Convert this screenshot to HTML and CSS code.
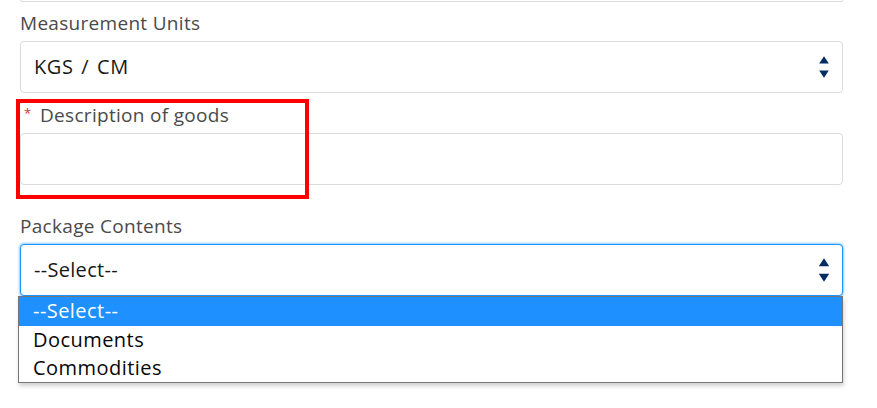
FILE: index.html
```html
<!DOCTYPE html>
<html lang="en">
<head>
<meta charset="utf-8">
<title>Shipment form</title>
<link rel="stylesheet" href="styles.css">
</head>
<body>
<div class="form">
  <div class="field-remnant"></div>

  <div class="field field-units">
    <div class="label">Measurement Units</div>
    <div class="select">
      <span class="select-value select-value-wide">KGS / CM</span>
      <svg class="arrows" width="12" height="26" viewBox="0 0 12 26" aria-hidden="true">
        <path d="M1.2 9.5 L6 2.3 L10.8 9.5 Z" fill="#032d60"/>
        <path d="M1.2 16.5 L6 23.7 L10.8 16.5 Z" fill="#032d60"/>
      </svg>
    </div>
  </div>

  <div class="field field-desc">
    <div class="label"><abbr class="req">*</abbr>Description of goods</div>
    <div class="input"></div>
    <div class="highlight"></div>
  </div>

  <div class="field field-contents">
    <div class="label">Package Contents</div>
    <div class="select select-focus">
      <span class="select-value">--Select--</span>
      <svg class="arrows" width="12" height="28" viewBox="0 0 12 28" aria-hidden="true">
        <path d="M0.8 10.3 L6 2.3 L11.2 10.3 Z" fill="#032d60"/>
        <path d="M0.8 17.7 L6 25.7 L11.2 17.7 Z" fill="#032d60"/>
      </svg>
      <ul class="listbox">
        <li class="option option-active">--Select--</li>
        <li class="option">Documents</li>
        <li class="option">Commodities</li>
      </ul>
    </div>
  </div>
</div>
</body>
</html>
```

FILE: styles.css
```css
* { box-sizing: border-box; }

html, body {
  margin: 0;
  padding: 0;
  background: #ffffff;
}

body {
  font-family: "Open Sans", "Liberation Sans", sans-serif;
  color: #080707;
}

.form {
  width: 877px;
  height: 408px;
  padding: 0 34px 0 20px;
  overflow: hidden;
}

.field-remnant {
  height: 2px;
  border: 1px solid #dddbda;
  border-top: none;
  border-radius: 0 0 4px 4px;
}

.label {
  font-size: 19px;
  line-height: 24px;
  letter-spacing: 0.3px;
  color: #4a4a4a;
  height: 24px;
}

.field-units { padding-top: 9px; }
.field-units .label { margin-bottom: 6px; }

.field-desc {
  position: relative;
  padding-top: 10px;
}
.field-desc .label { margin-bottom: 6px; }

.req {
  text-decoration: none;
  color: #c23934;
  font-size: 13px;
  display: inline-block;
  width: 20px;
  padding-left: 4px;
  vertical-align: top;
  line-height: 20px;
  letter-spacing: 0;
}

.highlight {
  position: absolute;
  left: -4px;
  top: 6px;
  width: 293px;
  height: 100px;
  border: 4px solid #ff0000;
  pointer-events: none;
}

.field-contents { padding-top: 29px; }
.field-contents .label { margin-bottom: 6px; }

.select, .input {
  height: 52px;
  border: 1px solid #dddbda;
  border-radius: 4px;
  background: #ffffff;
}

.select {
  position: relative;
  display: flex;
  align-items: center;
  justify-content: space-between;
  padding: 0 12px 0 13px;
}

.select-value {
  font-size: 20px;
  line-height: 26px;
  letter-spacing: 0.3px;
  color: #181818;
}

.select-value-wide {
  letter-spacing: 0.6px;
  word-spacing: 2px;
}

.arrows { display: block; }

.select-focus {
  border-color: #1b96ff;
  box-shadow: 0 0 3px #1b96ff;
}

.listbox {
  position: absolute;
  left: -3px;
  top: 51px;
  width: 825px;
  margin: 0;
  padding: 0;
  list-style: none;
  background: #ffffff;
  border: 1px solid #767676;
  box-shadow: 1px 3px 4px rgba(0, 0, 0, 0.18);
}

.option {
  font-size: 20px;
  line-height: 28px;
  height: 28px;
  padding-left: 14px;
  letter-spacing: 0.45px;
  color: #080707;
}

.option-active {
  background: #1e90ff;
  color: #ffffff;
  height: 29px;
}
```
